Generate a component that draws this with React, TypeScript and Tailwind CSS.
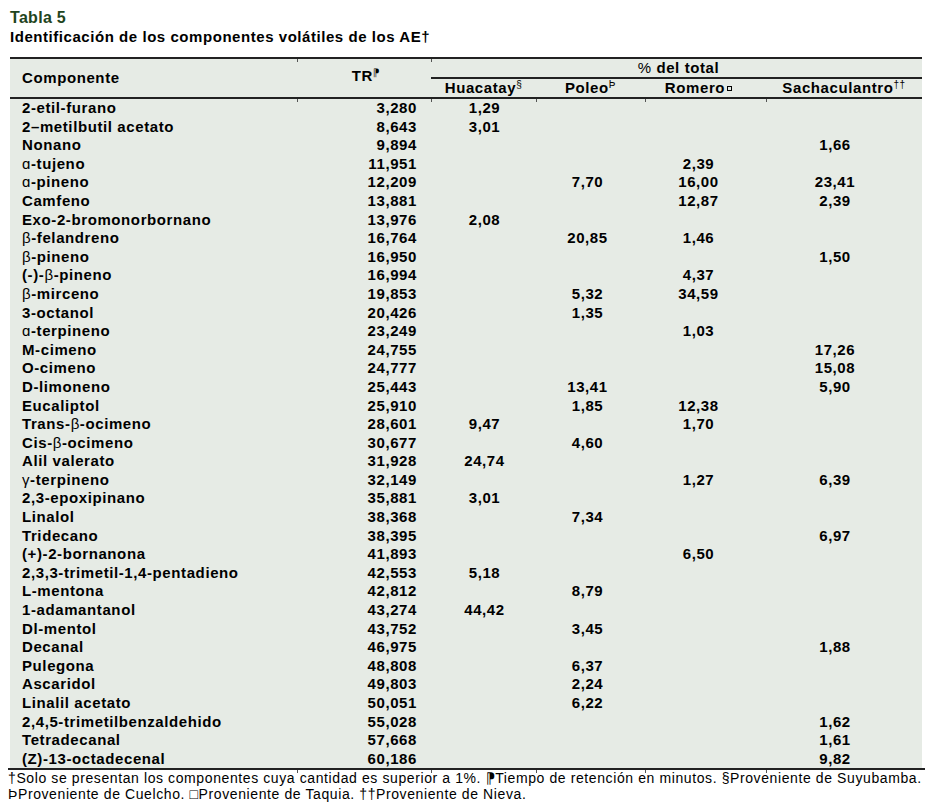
import React from "react";

type Row = {
  name: React.ReactNode;
  tr: string;
  h?: string;
  p?: string;
  r?: string;
  s?: string;
};

const G = ({ c }: { c: string }) => <span className="font-normal">{c}</span>;

const rows: Row[] = [
  { name: "2-etil-furano", tr: "3,280", h: "1,29" },
  { name: "2–metilbutil acetato", tr: "8,643", h: "3,01" },
  { name: "Nonano", tr: "9,894", s: "1,66" },
  { name: <><G c="ɑ" />-tujeno</>, tr: "11,951", r: "2,39" },
  { name: <><G c="ɑ" />-pineno</>, tr: "12,209", p: "7,70", r: "16,00", s: "23,41" },
  { name: "Camfeno", tr: "13,881", r: "12,87", s: "2,39" },
  { name: "Exo-2-bromonorbornano", tr: "13,976", h: "2,08" },
  { name: <><G c="β" />-felandreno</>, tr: "16,764", p: "20,85", r: "1,46" },
  { name: <><G c="β" />-pineno</>, tr: "16,950", s: "1,50" },
  { name: <>(-)-<G c="β" />-pineno</>, tr: "16,994", r: "4,37" },
  { name: <><G c="β" />-mirceno</>, tr: "19,853", p: "5,32", r: "34,59" },
  { name: "3-octanol", tr: "20,426", p: "1,35" },
  { name: <><G c="ɑ" />-terpineno</>, tr: "23,249", r: "1,03" },
  { name: "M-cimeno", tr: "24,755", s: "17,26" },
  { name: "O-cimeno", tr: "24,777", s: "15,08" },
  { name: "D-limoneno", tr: "25,443", p: "13,41", s: "5,90" },
  { name: "Eucaliptol", tr: "25,910", p: "1,85", r: "12,38" },
  { name: <>Trans-<G c="β" />-ocimeno</>, tr: "28,601", h: "9,47", r: "1,70" },
  { name: <>Cis-<G c="β" />-ocimeno</>, tr: "30,677", p: "4,60" },
  { name: "Alil valerato", tr: "31,928", h: "24,74" },
  { name: <><G c="γ" />-terpineno</>, tr: "32,149", r: "1,27", s: "6,39" },
  { name: "2,3-epoxipinano", tr: "35,881", h: "3,01" },
  { name: "Linalol", tr: "38,368", p: "7,34" },
  { name: "Tridecano", tr: "38,395", s: "6,97" },
  { name: "(+)-2-bornanona", tr: "41,893", r: "6,50" },
  { name: "2,3,3-trimetil-1,4-pentadieno", tr: "42,553", h: "5,18" },
  { name: "L-mentona", tr: "42,812", p: "8,79" },
  { name: "1-adamantanol", tr: "43,274", h: "44,42" },
  { name: "Dl-mentol", tr: "43,752", p: "3,45" },
  { name: "Decanal", tr: "46,975", s: "1,88" },
  { name: "Pulegona", tr: "48,808", p: "6,37" },
  { name: "Ascaridol", tr: "49,803", p: "2,24" },
  { name: "Linalil acetato", tr: "50,051", p: "6,22" },
  { name: "2,4,5-trimetilbenzaldehido", tr: "55,028", s: "1,62" },
  { name: "Tetradecanal", tr: "57,668", s: "1,61" },
  { name: "(Z)-13-octadecenal", tr: "60,186", s: "9,82" },
];

const cols = "grid grid-cols-[287px_134px_105px_109px_121px_156px]";

// little tick marks that the column rules leave under each horizontal line
const Tick = () => (
  <span className="absolute left-0 top-0 h-[3px] w-px bg-[#555]" />
);

const Sup = ({ children }: { children: React.ReactNode }) => (
  <span className="relative -top-[4px] text-[10px] font-normal tracking-[0.5px]">{children}</span>
);

// small hollow square used as the Romero footnote mark
const Box = () => (
  <span className="inline-block w-[5px] h-[5px] border border-black align-[6px] ml-[2px]" />
);

export default function App() {
  return (
    <div className="w-[938px] h-[807px] bg-white text-black font-['Liberation_Sans',Arial,sans-serif]">
      <div className="pt-[8px] pl-[10px]">
        <h1 className="text-[16px] leading-[19px] font-bold tracking-[0.3px] text-[#1f4420]">
          Tabla 5
        </h1>
        <h2 className="text-[15px] leading-[19px] font-bold tracking-[0.55px]">
          Identificación de los componentes volátiles de los AE†
        </h2>
      </div>

      <div className="mt-[11px] ml-[10px] w-[912px] bg-[#e6ebe5] border-t-2 border-[#222] text-[15px] font-bold tracking-[0.6px]">
        {/* header */}
        <div className={`${cols} grid-rows-[20px_18px] border-b-2 border-[#222]`}>
          <div className="row-span-2 flex items-center pl-[12px]">Componente</div>
          <div className="relative row-span-2 flex items-center justify-center pb-[3px] pl-[4px]">
            <Tick />
            TR<Sup>⁋</Sup>
          </div>
          <div className="relative col-span-4 flex items-center justify-center border-b-2 border-[#222] pl-[4px]">
            <Tick />
            <span className="font-normal">%</span>&nbsp;del total
          </div>
          <div className="flex items-center justify-center pt-[1px]">
            Huacatay<Sup>§</Sup>
          </div>
          <div className="relative flex items-center justify-center pt-[1px]">
            Poleo<Sup>Þ</Sup>
          </div>
          <div className="relative flex items-center justify-center pr-[14px] pt-[1px]">
            Romero<Box />
          </div>
          <div className="relative flex items-center justify-center pt-[1px]">
            Sachaculantro<Sup>††</Sup>
          </div>
        </div>

        {/* body */}
        <div>
          {rows.map((row, i) => (
            <div key={i} className={`${cols} h-[18.6px] leading-[18.6px]`}>
              <div className="pl-[12px] whitespace-nowrap">{row.name}</div>
              <div className="relative text-right pr-[14px]">
                {i === 0 && <Tick />}
                {row.tr}
              </div>
              <div className="relative text-center pl-[2px]">
                {i === 0 && <Tick />}
                {row.h}
              </div>
              <div className="relative text-center pr-[6px]">
                {i === 0 && <Tick />}
                {row.p}
              </div>
              <div className="relative text-center pr-[14px]">
                {i === 0 && <Tick />}
                {row.r}
              </div>
              <div className="relative text-center pr-[18px]">
                {i === 0 && <Tick />}
                {row.s}
              </div>
            </div>
          ))}
        </div>
      </div>

      <div className="ml-[8px] w-[917px] border-t-2 border-[#222] grid grid-cols-[289px_134px_105px_109px_121px_159px]">
        <div />
        <div className="relative h-[3px]"><Tick /></div>
        <div className="relative h-[3px]"><Tick /></div>
        <div className="relative h-[3px]"><Tick /></div>
        <div className="relative h-[3px]"><Tick /></div>
        <div className="relative h-[3px]"><Tick /></div>
      </div>

      <div className="-mt-[3px] pl-[8px] text-[14px] leading-[16px] tracking-[0.6px] whitespace-nowrap">
        <p>
          †Solo se presentan los componentes cuya cantidad es superior a 1%. ⁋Tiempo de retención en minutos. §Proveniente de Suyubamba.
        </p>
        <p>ÞProveniente de Cuelcho. □Proveniente de Taquia. ††Proveniente de Nieva.</p>
      </div>
    </div>
  );
}
